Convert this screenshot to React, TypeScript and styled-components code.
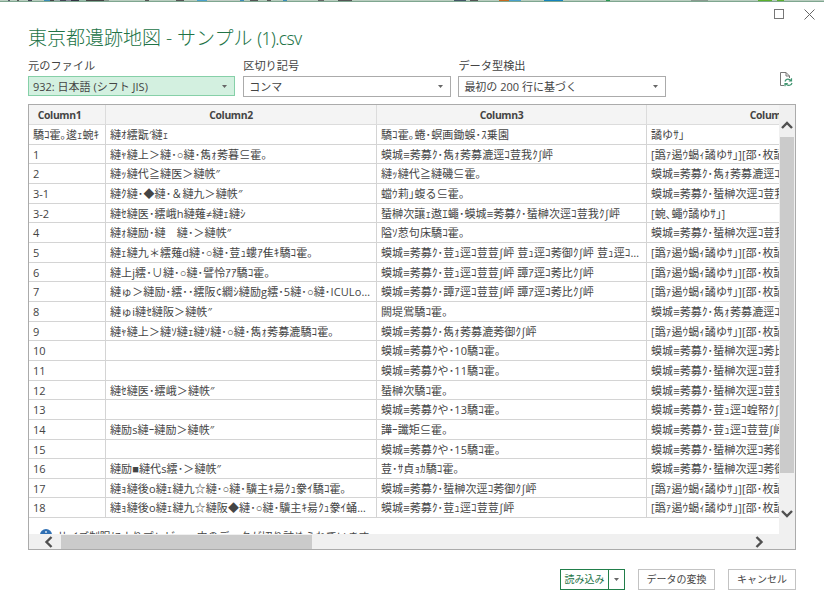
import React from "react";
import styled, { createGlobalStyle, css } from "styled-components";

const GlobalStyle = createGlobalStyle`
  * { box-sizing: border-box; }
  html, body { margin: 0; padding: 0; background: #fff; overflow: hidden; }
  body { font-family: "Open Sans", "Liberation Sans", "Noto Sans CJK JP", sans-serif; font-size: 11px; color: #444; }
`;

const Dialog = styled.div`
  width: 824px;
  height: 616px;
  display: flex;
  flex-direction: column;
  background: #fff;
  overflow: hidden;
`;

const BackdropStrip = styled.div`
  height: 2px;
  flex: none;
  border-bottom: 1px solid #7fa690;
  background: linear-gradient(
    90deg,
    #b9cdbf 0 8px, #556 8px 10px, #b9cdbf 10px 17px, #555 17px 19px, #b9cdbf 19px 28px, #445 28px 32px,
    #b9cdbf 32px 44px, #3a8bb8 44px 50px, #444 50px 54px, #9aa 54px 60px, #445 60px 66px, #889 66px 71px,
    #334 71px 79px, #9ba 79px 86px, #444 86px 104px, #8a9a90 104px 109px, #b9cdbf 109px 145px, #555 145px 149px,
    #b9cdbf 149px 176px, #555 176px 184px, #b9cdbf 184px 197px, #49a0cc 197px 207px, #c0ccc4 207px 240px,
    #3a8bb8 240px 244px, #b9cdbf 244px 250px, #555 250px 258px, #b9cdbf 258px 267px, #555 267px 271px,
    #b9cdbf 271px 283px, #3a8bb8 283px 287px, #b9cdbf 287px 318px, #666 318px 324px, #b9cdbf 324px 338px,
    #555 338px 352px, #b9cdbf 352px 454px, #456 454px 466px, #b9cdbf 466px 470px, #555 470px 478px,
    #b9cdbf 478px 499px, #c66a20 499px 509px, #49a0cc 509px 521px, #b9cdbf 521px 544px, #1583bd 544px 563px,
    #b9cdbf 563px 606px, #2a9a50 606px 610px, #b9cdbf 610px 691px, #8a9a90 691px 708px, #b9cdbf 708px 758px,
    #5cb02c 758px 772px, #b9cdbf 772px 777px, #5cb02c 777px 784px, #b9cdbf 784px
  );
`;

const WindowControls = styled.div`
  flex: none;
  height: 24px;
  display: flex;
  justify-content: flex-end;
  gap: 19px;
  padding: 7px 9px 0 0;
`;

const Title = styled.h1`
  margin: 0;
  padding-left: 28px;
  height: 30px;
  line-height: 24px;
  font-size: 19px;
  font-weight: 300;
  color: #217346;
  white-space: nowrap;
`;

const TitleTail = styled.span`
  font-family: "Noto Sans", "Open Sans", sans-serif;
  font-size: 17.4px;
  letter-spacing: -0.6px;
`;

const Options = styled.div`
  flex: none;
  height: 48px;
  display: flex;
  gap: 7.8px;
  padding: 1px 28px 0;
`;

const Field = styled.div`
  width: 207.4px;
`;

const Label = styled.div`
  height: 19px;
  line-height: 17px;
  font-size: 11.2px;
`;

const Select = styled.div<{ $active?: boolean }>`
  height: 21px;
  display: flex;
  align-items: center;
  justify-content: space-between;
  padding: 0 7px 0 5px;
  line-height: 17px;
  border: 1px solid #ababab;
  background: #fff;
  ${(p) =>
    p.$active &&
    css`
      border-color: #86d0a8;
      background: #d3f0e0;
      height: 20px;
      padding-left: 4px;
    `}
`;

const RefreshSlot = styled.div`
  margin-left: auto;
  padding: 14px 3px 0 0;
`;

const Frame = styled.div`
  flex: none;
  width: 768px;
  height: 446px;
  margin: 0 28px;
  border: 1px solid #ababab;
  display: grid;
  grid-template-columns: 750px 1fr;
  grid-template-rows: 429px 1fr;
`;

const Viewport = styled.div`
  overflow: hidden;
  background: #fff;
`;

const Grid = styled.div`
  width: 888px;
`;

const Row = styled.div<{ $header?: boolean }>`
  display: grid;
  grid-template-columns: 77px 271px 270px 270px;
  height: ${(p) => (p.$header ? "20px" : "19.67px")};
  ${(p) =>
    p.$header &&
    css`
      background: #f4f4f4;
      font-size: 10.4px;
      font-weight: 700;
      letter-spacing: -0.35px;
      text-align: center;
    `}
`;

const Cell = styled.div`
  border-right: 1px solid #d4d4d4;
  border-bottom: 1px solid #d4d4d4;
  padding: 0 6px 0 4px;
  line-height: 19.4px;
  white-space: nowrap;
  overflow: hidden;
  text-overflow: ellipsis;
`;

const DataCell = styled(Cell)`
  letter-spacing: 0.11px;

  &:first-child {
    padding-right: 0;
    letter-spacing: 0;
  }
`;

const HeadCell = styled(Cell)`
  padding: 0 20px 0 0;
  border-color: #dcdcdc;
  line-height: 21px;

  &:first-child {
    padding: 0 15px 0 0;
  }
`;

const Notice = styled.div`
  display: flex;
  gap: 5px;
  padding: 11px 0 0 11px;
  line-height: 16px;
  font-size: 10.8px;
  white-space: nowrap;
`;

const VerticalBar = styled.div`
  background: #f0f0f0;
  display: flex;
  flex-direction: column;
  align-items: flex-start;
  padding-top: 15px;
`;

const VerticalThumb = styled.div`
  width: 14px;
  height: 336px;
  margin: 7px 0 36px 1px;
  background: #cbcbcb;
`;

const HorizontalBar = styled.div`
  grid-column: 1 / -1;
  background: #f0f0f0;
  display: flex;
  align-items: center;
  padding-left: 14px;
`;

const HorizontalThumb = styled.div`
  width: 251px;
  height: 14px;
  margin: 0 442px 0 7px;
  background: #cbcbcb;
`;

const Footer = styled.div`
  display: flex;
  justify-content: flex-end;
  gap: 13px;
  padding: 19px 28px 0 0;
`;

const Button = styled.button<{ $width: number }>`
  width: ${(p) => p.$width}px;
  height: 21px;
  padding: 0 0 1px;
  border: 1px solid #c3c3c3;
  background: #fff;
  color: #444;
  font: inherit;
  font-size: 10px;
  line-height: 17px;
  white-space: nowrap;
`;

const SplitButton = styled.div`
  display: flex;
  width: 65px;
  height: 21px;
  border: 1px solid #217e4a;
  color: #217346;
  line-height: 18px;
`;

const SplitMain = styled.div`
  width: 48px;
  border-right: 1px solid #217e4a;
  text-align: center;
  font-size: 10px;
  white-space: nowrap;
`;

const SplitArrow = styled.div`
  flex: 1;
  display: flex;
  align-items: center;
  justify-content: center;
`;

const Caret = () => (
  <svg width="5" height="3" viewBox="0 0 5 3">
    <path d="M0 0h5L2.5 3z" fill="#666" />
  </svg>
);

const Chevron = ({ d, w, h }: { d: string; w: number; h: number }) => (
  <svg width={w} height={h} viewBox={`0 0 ${w} ${h}`}>
    <path d={d} fill="none" stroke="#505050" strokeWidth="2.4" />
  </svg>
);

const A = "蟆城≡莠募ｸ";
const MINAMI = "雋ｫ莠募漉";
const MAE = "蜑榊次逕ｺ";
const NAKA = "荳ｭ逕ｺ";
const PERIOD = "[譌ｧ遏ｳ蝎ｨ譎ゆｻ｣][邵･枚譎ゆｻ｣]";

const rows: string[][] = [
  ["驕ｺ霍｡逡ｪ蜿ｷ", "縺ｵ繧翫′縺ｪ", "驕ｺ霍｡蜷･螟画鋤蜈･ｽ乗園", "譎ゆｻ｣"],
  ["1", "縺ｬ縺上＞縺･○縺･雋ｫ莠暮⊆霍｡", `${A}･${MINAMI}逕ｺ荳我ｸ∫岼`, PERIOD],
  ["2", "縺ｯ縺代≧縺医＞縺帙″", "縺ｯ縺代≧縺磯⊆霍｡", `${A}･${MINAMI}逕ｺ荳我ｸ∫岼`],
  ["3-1", "縺ｸ縺･◆縺･＆縺九＞縺帙″", "蟷ｳ莉｣蝮る⊆霍｡", `${A}･${MAE}荳我ｸ∫岼`],
  ["3-2", "縺ｾ縺医･繧峨h縺薙≠縺ｪ縺ｼ", `蜑榊次讓ｪ遨ｴ蠅･${A}･${MAE}荳我ｸ∫岼`, "[蜿､蠅ｳ譎ゆｻ｣]"],
  ["4", "縺ｫ縺励･縺　縺･＞縺帙″", "隘ｿ荵句床驕ｺ霍｡", `${A}･${MAE}荳我ｸ∫岼`],
  ["5", "縺ｪ縺九＊繧薙d縺･○縺･荳ｭ螻ｱ隹ｷ驕ｺ霍｡", `${A}･${NAKA}荳荳∫岼 ${NAKA}莠御ｸ∫岼 ${NAKA}荳我ｸ∫岼`, PERIOD],
  ["6", "縺上j繧･∪縺･○縺･譬怜ｱｱ驕ｺ霍｡", `${A}･${NAKA}荳荳∫岼 譚ｱ逕ｺ莠比ｸ∫岼`, PERIOD],
  ["7", "縺ゅ＞縺励･繧･･繧阪¢繝ｼ縺励g繧･5縺･○縺･ICULoc.5驕ｺ霍｡", `${A}･譚ｱ逕ｺ荳荳∫岼 譚ｱ逕ｺ莠比ｸ∫岼`, PERIOD],
  ["8", "縺ゅi縺ｾ縺阪＞縺帙″", "闕堤鴬驕ｺ霍｡", `${A}･${MINAMI}逕ｺ荳我ｸ∫岼`],
  ["9", "縺ｬ縺上＞縺ｿ縺ｪ縺ｿ縺･○縺･雋ｫ莠募漉驕ｺ霍｡", `${A}･${MINAMI}莠御ｸ∫岼`, PERIOD],
  ["10", "", `${A}や･10驕ｺ霍｡`, `${A}･${MAE}莠比ｸ∫岼`],
  ["11", "", `${A}や･11驕ｺ霍｡`, `${A}･${MAE}荳我ｸ∫岼`],
  ["12", "縺ｾ縺医･繧峨＞縺帙″", "蜑榊次驕ｺ霍｡", `${A}･${MAE}荳荳∫岼`],
  ["13", "", `${A}や･13驕ｺ霍｡`, `${A}･${NAKA}蝗帑ｸ∫岼`],
  ["14", "縺励s縺ｰ縺励＞縺帙″", "譁ｰ讖矩⊆霍｡", `${A}･${NAKA}荳荳∫岼`],
  ["15", "", `${A}や･15驕ｺ霍｡`, `${A}･${MAE}莠御ｸ∫岼`],
  ["16", "縺励■縺代s繧･＞縺帙″", "荳･ｻ貞ｮｶ驕ｺ霍｡", `${A}･${MAE}莠御ｸ∫岼`],
  ["17", "縺ｮ縺後o縺ｪ縺九☆縺･○縺･驥主ｷ昜ｸｭ豢ｲ驕ｺ霍｡", `${A}･${MAE}莠御ｸ∫岼`, PERIOD],
  ["18", "縺ｮ縺後o縺ｪ縺九☆縺阪◆縺･○縺･驥主ｷ昜ｸｭ豢ｲ蛹鈴⊆霍｡", `${A}･${NAKA}荳荳∫岼`, PERIOD],
];

export default function App() {
  return (
    <>
      <GlobalStyle />
      <Dialog>
        <BackdropStrip />
        <WindowControls>
          <svg width="11" height="11" viewBox="0 0 11 11">
            <rect x="0.5" y="0.5" width="9" height="9" fill="none" stroke="#777" />
          </svg>
          <svg width="11" height="11" viewBox="0 0 11 11">
            <path d="M.5.5l10 10M10.500.5l-10 10" stroke="#666" fill="none" />
          </svg>
        </WindowControls>
        <Title>
          東京都遺跡地図 - サンプル <TitleTail>(1).csv</TitleTail>
        </Title>
        <Options>
          <Field>
            <Label>元のファイル</Label>
            <Select $active>
              932: 日本語 (シフト JIS)
              <Caret />
            </Select>
          </Field>
          <Field>
            <Label>区切り記号</Label>
            <Select>
              コンマ
              <Caret />
            </Select>
          </Field>
          <Field>
            <Label>データ型検出</Label>
            <Select>
              最初の 200 行に基づく
              <Caret />
            </Select>
          </Field>
          <RefreshSlot>
            <svg width="14" height="16" viewBox="0 0 14 16" fill="none">
              <path d="M5 14.500H1.500V1.500H7L10.500 5v2M7 1.500V5h3.500" stroke="#777" />
              <path d="M6 10.500C6.500 8.500 8.500 7.500 11 8.700L12 9.700M12.500 7.200v2.800H9.800M13 12C12.300 14.400 9.500 15 7.500 13.500L6.500 12.700M6 15.300v-2.800h2.800" stroke="#3f9470" strokeWidth="1.200" />
            </svg>
          </RefreshSlot>
        </Options>
        <Frame>
          <Viewport>
            <Grid>
              <Row $header>
                {["Column1", "Column2", "Column3", "Column4"].map((name) => (
                  <HeadCell key={name}>{name}</HeadCell>
                ))}
              </Row>
              {rows.map((row) => (
                <Row key={row[0]}>
                  {row.map((text, i) => (
                    <DataCell key={i}>{text}</DataCell>
                  ))}
                </Row>
              ))}
            </Grid>
            <Notice>
              <svg width="12" height="12" viewBox="0 0 12 12">
                <circle cx="6" cy="6" r="6" fill="#2f6fb3" />
                <path d="M6 2.200v1.600M6 5v4.500" stroke="#fff" strokeWidth="1.600" />
              </svg>
              サイズ制限によりプレビュー内のデータが切り詰められています。
            </Notice>
          </Viewport>
          <VerticalBar>
            <Chevron w={16} h={10} d="M3 8L8 3L13 8" />
            <VerticalThumb />
            <Chevron w={16} h={10} d="M3 2L8 7L13 2" />
          </VerticalBar>
          <HorizontalBar>
            <Chevron w={11} h={12} d="M8.500 1L3.500 6L8.500 11" />
            <HorizontalThumb />
            <Chevron w={11} h={12} d="M2.500 1L7.500 6L2.500 11" />
          </HorizontalBar>
        </Frame>
        <Footer>
          <SplitButton>
            <SplitMain>読み込み</SplitMain>
            <SplitArrow>
              <Caret />
            </SplitArrow>
          </SplitButton>
          <Button $width={77}>データの変換</Button>
          <Button $width={68}>キャンセル</Button>
        </Footer>
      </Dialog>
    </>
  );
}
